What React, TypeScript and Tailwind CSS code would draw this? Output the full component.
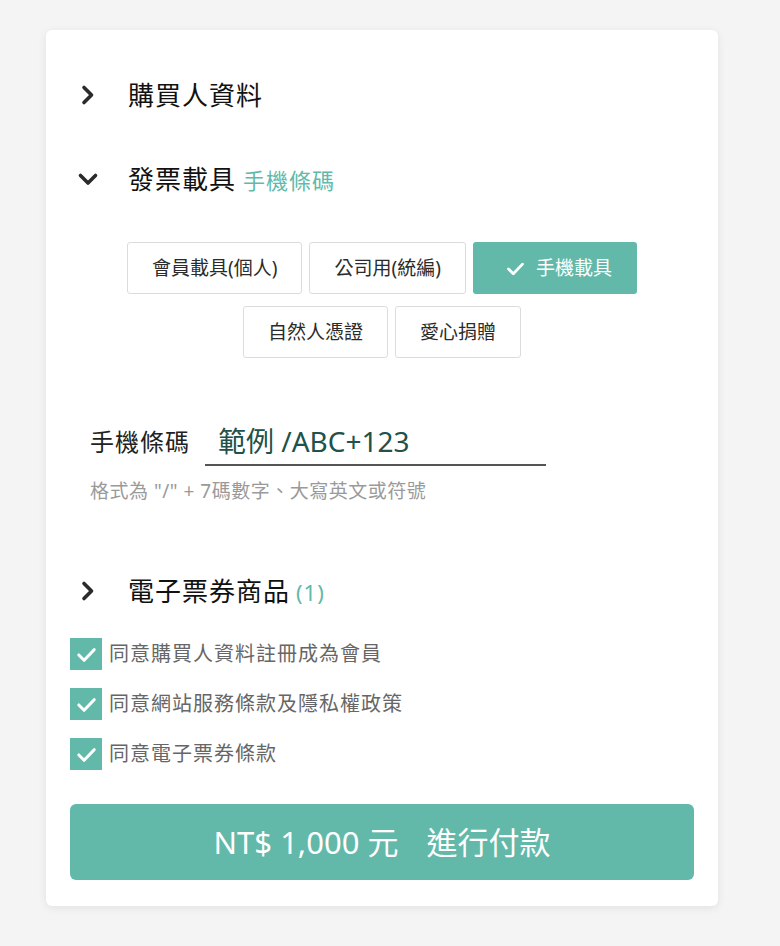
import React from "react";

const font = { fontFamily: '"Noto Sans", "Noto Sans CJK TC", sans-serif' };

function ChevronRight() {
  return (
    <svg width="24" height="24" viewBox="0 0 24 24" fill="none">
      <path d="M8 4.5 L15.5 12 L8 19.5" stroke="#2a2a2a" strokeWidth="3.6" strokeLinecap="round" strokeLinejoin="round" />
    </svg>
  );
}

function ChevronDown() {
  return (
    <svg width="24" height="24" viewBox="0 0 24 24" fill="none">
      <path d="M4.5 8.5 L12 16 L19.5 8.5" stroke="#2a2a2a" strokeWidth="3.6" strokeLinecap="round" strokeLinejoin="round" />
    </svg>
  );
}

function Check({ size = 18, width = 2.6 }: { size?: number; width?: number }) {
  return (
    <svg width={size} height={size} viewBox="0 0 24 24" fill="none">
      <path d="M4 12.5 L9.5 18 L20 7" stroke="white" strokeWidth={width} strokeLinecap="round" strokeLinejoin="round" />
    </svg>
  );
}

function OptionButton({ label, selected = false }: { label: string; selected?: boolean }) {
  if (selected) {
    return (
      <div className="flex h-[52px] items-center rounded-[3px] bg-[#62b9aa] pl-[32px] pr-[25px] text-[19px] text-white">
        <Check size={21} width={3.2} />
        <span className="ml-[10px]">{label}</span>
      </div>
    );
  }
  return (
    <div className="flex h-[52px] items-center rounded-[3px] border border-[#dcdcdc] bg-white px-[24px] text-[19px] text-[#2b2b2b]">
      {label}
    </div>
  );
}

function Header({ open, children }: { open?: boolean; children: React.ReactNode }) {
  return (
    <div className="flex h-[44px] items-center pl-[6px]">
      <div className="flex w-[24px] items-center justify-center">{open ? <ChevronDown /> : <ChevronRight />}</div>
      <div className="ml-[28px] flex items-baseline text-[26px] font-normal tracking-[1px] text-[#111]">{children}</div>
    </div>
  );
}

function Agree({ label }: { label: string }) {
  return (
    <div className="flex h-[32px] items-center">
      <div className="flex h-[32px] w-[32px] items-center justify-center bg-[#62b9aa]">
        <Check size={23} width={3.2} />
      </div>
      <span className="ml-[7px] text-[20px] tracking-[1px] text-[#666]">{label}</span>
    </div>
  );
}

export default function App() {
  return (
    <div className="min-h-[946px] w-full bg-[#f4f4f4] pt-[30px]" style={font}>
      <div className="ml-[46px] w-[672px] rounded-[6px] bg-white px-[24px] pb-[26px] pt-[43px] shadow-[0_2px_8px_rgba(0,0,0,0.08)]">
        <Header>購買人資料</Header>
        <div className="mt-[40px]">
          <Header open>
            發票載具
            <span className="ml-[7px] text-[22px] font-normal tracking-[1px] text-[#62b9aa]">手機條碼</span>
          </Header>
        </div>

        <div className="mt-[41px] flex flex-col items-center gap-[12px]">
          <div className="flex gap-[7px]">
            <OptionButton label="會員載具(個人)" />
            <OptionButton label="公司用(統編)" />
            <OptionButton label="手機載具" selected />
          </div>
          <div className="flex gap-[7px]">
            <OptionButton label="自然人憑證" />
            <OptionButton label="愛心捐贈" />
          </div>
        </div>

        <div className="mt-[60px] flex items-center pl-[20px]">
          <span className="w-[115px] text-[24px] tracking-[1px] text-[#222]">手機條碼</span>
          <div className="flex h-[48px] w-[341px] items-center border-b-2 border-[#555] pl-[13px] text-[28px] text-[#22504a]">
            範例 /ABC+123
          </div>
        </div>
        <div className="mt-[13px] pl-[20px] text-[19px] leading-[24px] tracking-[0.5px] text-[#9a9a9a]">
          格式為 "/" + 7碼數字、大寫英文或符號
        </div>

        <div className="mt-[66px]">
          <Header>
            電子票券商品
            <span className="ml-[6px] text-[22px] font-normal tracking-[1px] text-[#62b9aa]">(1)</span>
          </Header>
        </div>

        <div className="mt-[25px] flex flex-col gap-[18px]">
          <Agree label="同意購買人資料註冊成為會員" />
          <Agree label="同意網站服務條款及隱私權政策" />
          <Agree label="同意電子票券條款" />
        </div>

        <button className="mt-[34px] flex h-[76px] w-full items-center justify-center rounded-[6px] bg-[#62b9aa] text-[31px] text-white">
          <span>NT$ 1,000 元</span>
          <span className="ml-[28px]">進行付款</span>
        </button>
      </div>
    </div>
  );
}
